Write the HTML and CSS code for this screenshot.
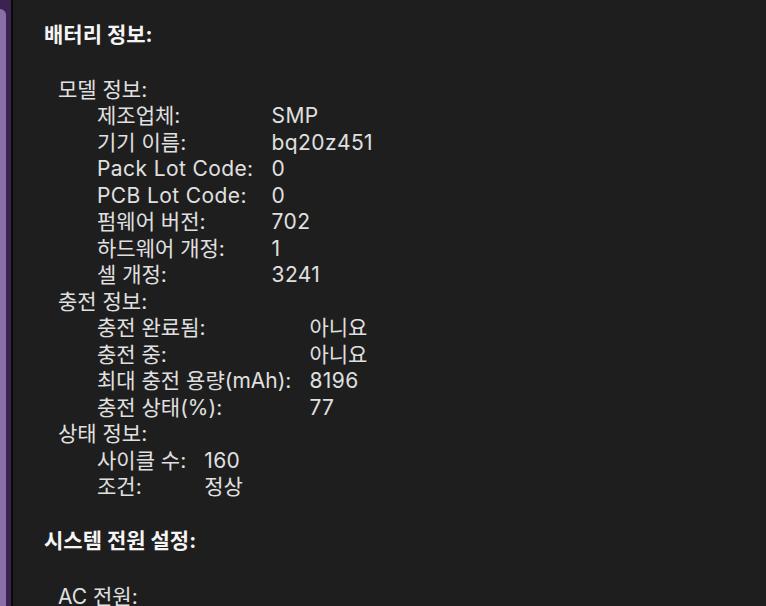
FILE: index.html
```html
<!DOCTYPE html>
<html lang="ko">
<head>
<meta charset="utf-8">
<title>배터리 정보</title>
<link rel="stylesheet" href="styles.css">
</head>
<body>
<div class="window">
  <div class="edge"><div class="edge-fill"></div></div>
  <main class="content">
    <section class="section">
      <h2 class="heading">배터리 정보:</h2>
      <div class="groups">
        <div class="group">
          <div class="group-title">모델 정보:</div>
          <dl class="kv">
            <dt>제조업체:</dt><dd class="lat">SMP</dd>
            <dt>기기 이름:</dt><dd class="lat">bq20z451</dd>
            <dt class="lat">Pack Lot Code:</dt><dd class="lat">0</dd>
            <dt class="lat">PCB Lot Code:</dt><dd class="lat">0</dd>
            <dt>펌웨어 버전:</dt><dd class="lat">702</dd>
            <dt>하드웨어 개정:</dt><dd class="lat">1</dd>
            <dt>셀 개정:</dt><dd class="lat">3241</dd>
          </dl>
        </div>
        <div class="group">
          <div class="group-title">충전 정보:</div>
          <dl class="kv">
            <dt>충전 완료됨:</dt><dd>아니요</dd>
            <dt>충전 중:</dt><dd>아니요</dd>
            <dt>최대 충전 용량(mAh):</dt><dd class="lat">8196</dd>
            <dt>충전 상태(%):</dt><dd class="lat">77</dd>
          </dl>
        </div>
        <div class="group">
          <div class="group-title">상태 정보:</div>
          <dl class="kv">
            <dt>사이클 수:</dt><dd class="lat">160</dd>
            <dt>조건:</dt><dd>정상</dd>
          </dl>
        </div>
      </div>
    </section>
    <section class="section">
      <h2 class="heading">시스템 전원 설정:</h2>
      <div class="groups">
        <div class="group">
          <div class="group-title">AC 전원:</div>
        </div>
      </div>
    </section>
  </main>
</div>
</body>
</html>
```
FILE: styles.css
```css
* { box-sizing: border-box; }
html, body {
  margin: 0;
  padding: 0;
  height: 100%;
  background: #1e1e1e;
  overflow: hidden;
}
body {
  font-family: Inter, "Noto Sans CJK KR", sans-serif;
  font-size: 21px;
  line-height: 26.5px;
  color: #e0e0e0;
}
.window {
  display: flex;
  height: 606px;
}
.edge {
  width: 13px;
  flex: none;
  background: #3a2350;
  border-right: 2px solid #0a0a0a;
  padding-top: 9px;
}
.edge-fill {
  width: 6px;
  height: 100%;
  background: #8a70a6;
  border-top-right-radius: 6px;
}
.content {
  flex: 1;
  padding: 22px 0 0 31px;
}
.section + .section {
  margin-top: 27px;
}
.heading {
  margin: 0 0 28px 0;
  font-size: 21px;
  font-weight: 700;
  line-height: 26.5px;
  color: #f4f4f4;
}
.section + .section .heading {
  margin-bottom: 30px;
}
.group {
  padding-left: 14px;
}
.kv {
  display: grid;
  grid-template-columns: max-content max-content;
  column-gap: 18px;
  margin: 0;
  padding-left: 39px;
}
.kv dt, .kv dd {
  margin: 0;
}
.lat {
  letter-spacing: 0.4px;
}
```
